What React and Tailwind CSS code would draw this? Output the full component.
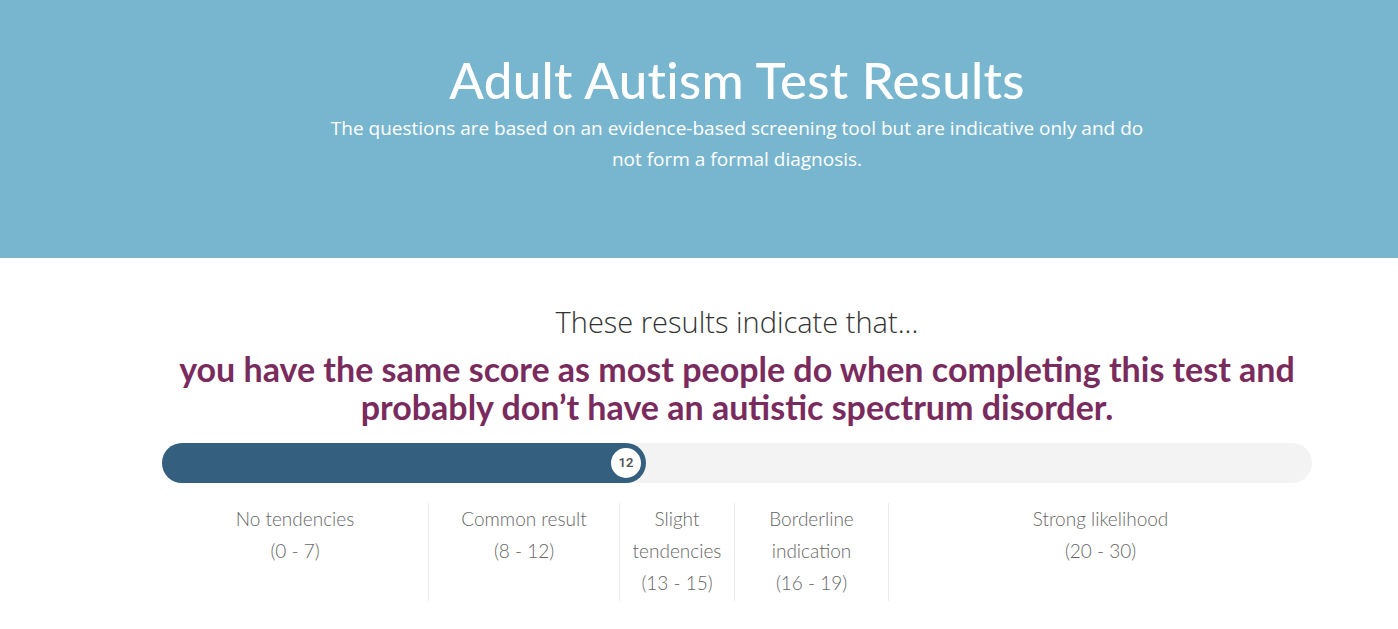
const bands = [
  { label: "No tendencies", range: "(0 - 7)", width: "w-[267px]" },
  { label: "Common result", range: "(8 - 12)", width: "w-[191px]" },
  { label: "Slight tendencies", range: "(13 - 15)", width: "w-[115px]" },
  { label: "Borderline indication", range: "(16 - 19)", width: "w-[154px]" },
  { label: "Strong likelihood", range: "(20 - 30)", width: "flex-1" },
];

const ScoreBar = ({ score }) => (
  <div className="h-10 rounded-full bg-[#f3f3f3] flex">
    <div className="w-[484px] h-10 rounded-full bg-[#345f7e] flex items-center justify-end pr-[2px]">
      <div className="w-9 h-9 rounded-full bg-white border-[3px] border-[#345f7e] flex items-center justify-center text-[13px] font-semibold text-[#555] font-['Roboto',sans-serif]">
        {score}
      </div>
    </div>
  </div>
);

const App = () => {
  return (
    <div className="min-h-screen bg-white font-['Lato',sans-serif]">
      <header className="bg-[#78b6cf] h-[258px] pt-[52px]">
        <div className="w-[1150px] ml-[162px] flex flex-col items-center text-white text-center">
          <h1 className="text-[51px] leading-[56px] font-medium tracking-[0.3px]">
            Adult Autism Test Results
          </h1>
          <p className="mt-[5px] w-[830px] text-[19px] leading-[31px] font-['Open_Sans',sans-serif]">
            The questions are based on an evidence-based screening tool but are indicative only and do not form a formal diagnosis.
          </p>
        </div>
      </header>

      <main className="w-[1150px] ml-[162px] pt-[44px]">
        <h2 className="text-center text-[29px] leading-[40px] font-light text-[#333] font-['Open_Sans',sans-serif]">
          These results indicate that...
        </h2>
        <p className="mt-[8px] text-center text-[34px] leading-[38px] font-bold text-[#7a2b5e]">
          you have the same score as most people do when completing this test and
          <br />
          probably don’t have an autistic spectrum disorder.
        </p>

        <div className="mt-[17px]">
          <ScoreBar score={12} />
        </div>

        <div className="flex mt-[20px]">
          {bands.map((band, i) => (
            <div
              key={band.label}
              className={`${band.width} text-center text-[19px] leading-[32px] font-light text-[#666] pb-[2px] ${
                i < bands.length - 1 ? "border-r border-[#ececec]" : ""
              }`}
            >
              <div>{band.label}</div>
              <div>{band.range}</div>
            </div>
          ))}
        </div>
      </main>
    </div>
  );
};

export default App;
